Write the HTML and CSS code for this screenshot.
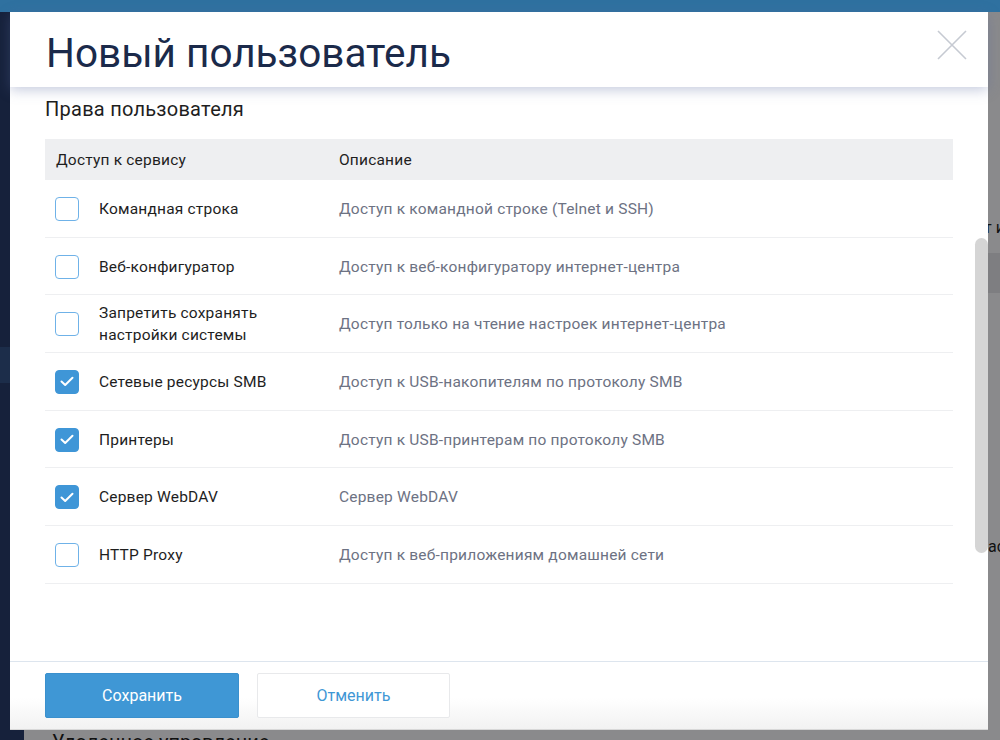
FILE: index.html
```html
<!DOCTYPE html>
<html lang="ru">
<head>
<meta charset="utf-8">
<title>Новый пользователь</title>
<link rel="stylesheet" href="styles.css">
</head>
<body>
<div class="page">
  <div class="topbar"></div>
  <div class="app">
    <aside class="sidebar">
      <div class="side-band"></div>
    </aside>
    <main class="content">
      <div class="bg-right">
        <span class="bg-frag1">т и</span>
        <div class="bg-band"></div>
        <span class="bg-frag2">ас</span>
      </div>
      <div class="bg-bottom">Удаленное управление</div>
    </main>
  </div>

  <div class="modal">
    <header class="modal-header">
      <h1 class="modal-title">Новый пользователь</h1>
      <button class="close-btn" aria-label="Закрыть">
        <svg width="30" height="30" viewBox="0 0 30 30"><path d="M1 1 L29 29 M29 1 L1 29" stroke="#c6cad2" stroke-width="1.6" fill="none"/></svg>
      </button>
    </header>
    <div class="modal-body">
      <h2 class="section-title">Права пользователя</h2>
      <div class="table">
        <div class="thead">
          <div class="col-service">Доступ к сервису</div>
          <div class="col-desc">Описание</div>
        </div>
        <div class="row">
          <div class="col-service"><span class="cb"></span><span class="label">Командная строка</span></div>
          <div class="col-desc">Доступ к командной строке (Telnet и SSH)</div>
        </div>
        <div class="row">
          <div class="col-service"><span class="cb"></span><span class="label">Веб-конфигуратор</span></div>
          <div class="col-desc">Доступ к веб-конфигуратору интернет-центра</div>
        </div>
        <div class="row">
          <div class="col-service"><span class="cb"></span><span class="label">Запретить сохранять<br>настройки системы</span></div>
          <div class="col-desc">Доступ только на чтение настроек интернет-центра</div>
        </div>
        <div class="row">
          <div class="col-service"><span class="cb checked"><svg width="14" height="11" viewBox="0 0 14 11"><path d="M1.5 5.5 L5.2 9 L12.5 1.8" stroke="#fff" stroke-width="2" fill="none" stroke-linecap="round" stroke-linejoin="round"/></svg></span><span class="label">Сетевые ресурсы SMB</span></div>
          <div class="col-desc">Доступ к USB-накопителям по протоколу SMB</div>
        </div>
        <div class="row">
          <div class="col-service"><span class="cb checked"><svg width="14" height="11" viewBox="0 0 14 11"><path d="M1.5 5.5 L5.2 9 L12.5 1.8" stroke="#fff" stroke-width="2" fill="none" stroke-linecap="round" stroke-linejoin="round"/></svg></span><span class="label">Принтеры</span></div>
          <div class="col-desc">Доступ к USB-принтерам по протоколу SMB</div>
        </div>
        <div class="row">
          <div class="col-service"><span class="cb checked"><svg width="14" height="11" viewBox="0 0 14 11"><path d="M1.5 5.5 L5.2 9 L12.5 1.8" stroke="#fff" stroke-width="2" fill="none" stroke-linecap="round" stroke-linejoin="round"/></svg></span><span class="label">Сервер WebDAV</span></div>
          <div class="col-desc">Сервер WebDAV</div>
        </div>
        <div class="row">
          <div class="col-service"><span class="cb"></span><span class="label">HTTP Proxy</span></div>
          <div class="col-desc">Доступ к веб-приложениям домашней сети</div>
        </div>
      </div>
      <div class="scrollbar"></div>
    </div>
    <footer class="modal-footer">
      <button class="btn btn-primary">Сохранить</button>
      <button class="btn btn-secondary">Отменить</button>
    </footer>
  </div>
</div>
</body>
</html>
```
FILE: styles.css
```css
* { box-sizing: border-box; }
html, body { margin: 0; padding: 0; }
body {
  width: 1000px;
  height: 740px;
  overflow: hidden;
  font-family: Roboto, "Noto Sans", sans-serif;
  background: #8a8a8c;
}
.page {
  position: relative;
  width: 1000px;
  height: 740px;
  display: flex;
  flex-direction: column;
}
.topbar {
  height: 12px;
  background: #2f71a0;
  flex: none;
}
.app {
  flex: 1;
  display: flex;
}
.sidebar {
  width: 24px;
  background: #16213b;
  padding-top: 335px;
}
.side-band {
  height: 36px;
  background: #1c2d4a;
}
.content {
  flex: 1;
  display: flex;
  flex-direction: column;
  justify-content: flex-end;
  position: relative;
  background: #8a8a8c;
}
.bg-right {
  position: absolute;
  right: 0;
  top: 0;
  width: 12px;
  height: 100%;
  overflow: hidden;
}
.bg-frag1 {
  display: block;
  margin-top: 206px;
  margin-left: -4px;
  font-size: 16px;
  color: #111;
  white-space: nowrap;
  height: 20px;
}
.bg-band {
  margin-top: 15px;
  height: 40px;
  background: #7e7e81;
}
.bg-frag2 {
  display: block;
  margin-top: 244px;
  font-size: 16px;
  color: #111;
  white-space: nowrap;
}
.bg-bottom {
  padding-left: 28px;
  font-size: 20px;
  color: #111;
  line-height: 24px;
  margin-bottom: -14px;
}

/* modal */
.modal {
  position: absolute;
  left: 10px;
  top: 12px;
  width: 978px;
  height: 718px;
  background: #fff;
  display: flex;
  flex-direction: column;
  border-bottom: 1px solid #d8d8d8;
}
.modal-header {
  height: 75px;
  flex: none;
  display: flex;
  align-items: center;
  justify-content: space-between;
  padding: 0 21px 0 36px;
  box-shadow: 0 3px 12px rgba(90, 105, 160, 0.35);
  position: relative;
  z-index: 2;
  background: #fff;
}
.modal-title {
  margin: 0;
  font-weight: 400;
  font-size: 40.5px;
  color: #1b2a4a;
  padding-top: 7px;
}
.close-btn {
  border: 0;
  background: none;
  padding: 0;
  width: 30px;
  height: 30px;
  margin-top: -10px;
}
.modal-body {
  flex: 1;
  position: relative;
  padding: 0 35px;
  overflow: hidden;
}
.section-title {
  margin: 10px 0 0;
  font-size: 20px;
  letter-spacing: 0.25px;
  font-weight: 400;
  color: #1e1e1e;
  line-height: 24px;
}
.table {
  margin-top: 18px;
  width: 908px;
  font-size: 15.5px;
  letter-spacing: 0.2px;
}
.thead, .row {
  display: grid;
  grid-template-columns: 294px 1fr;
  align-items: center;
}
.thead {
  height: 41px;
  background: #eeeff1;
  color: #1e1e1e;
}
.thead .col-service { padding-left: 11px; }
.row {
  height: 57.7px;
  border-bottom: 1px solid #eeeff1;
  padding-top: 1px;
}
.row .col-service {
  display: flex;
  align-items: center;
  padding-left: 10px;
}
.cb {
  width: 24px;
  height: 24px;
  border: 1.5px solid #6fb2e8;
  border-radius: 4px;
  flex: none;
  display: flex;
  align-items: center;
  justify-content: center;
  background: #fff;
}
.cb.checked {
  background: #3f96d7;
  border-color: #3f96d7;
}
.label {
  margin-left: 20px;
  color: #1e1e1e;
  line-height: 22px;
}
.row .col-desc {
  color: #6d7283;
}
.scrollbar {
  position: absolute;
  right: 0;
  top: 151px;
  width: 13px;
  height: 315px;
  background: #d5d5d5;
  border-radius: 7px;
}
.modal-footer {
  height: 68px;
  flex: none;
  border-top: 1px solid #dde5ee;
  padding: 11px 35px 0;
  display: flex;
  gap: 18px;
  align-items: flex-start;
  background: linear-gradient(#fff 0, #fff 36px, #f2f2f2 100%);
}
.btn {
  height: 45px;
  width: 194px;
  font-family: Roboto, "Noto Sans", sans-serif;
  font-size: 16px;
  border-radius: 2px;
  cursor: pointer;
}
.btn-primary {
  background: #3f97d5;
  border: 1px solid #3a90cd;
  color: #fff;
}
.btn-secondary {
  background: #fff;
  border: 1px solid #e8e9eb;
  color: #3f97d5;
  width: 193px;
}
```
